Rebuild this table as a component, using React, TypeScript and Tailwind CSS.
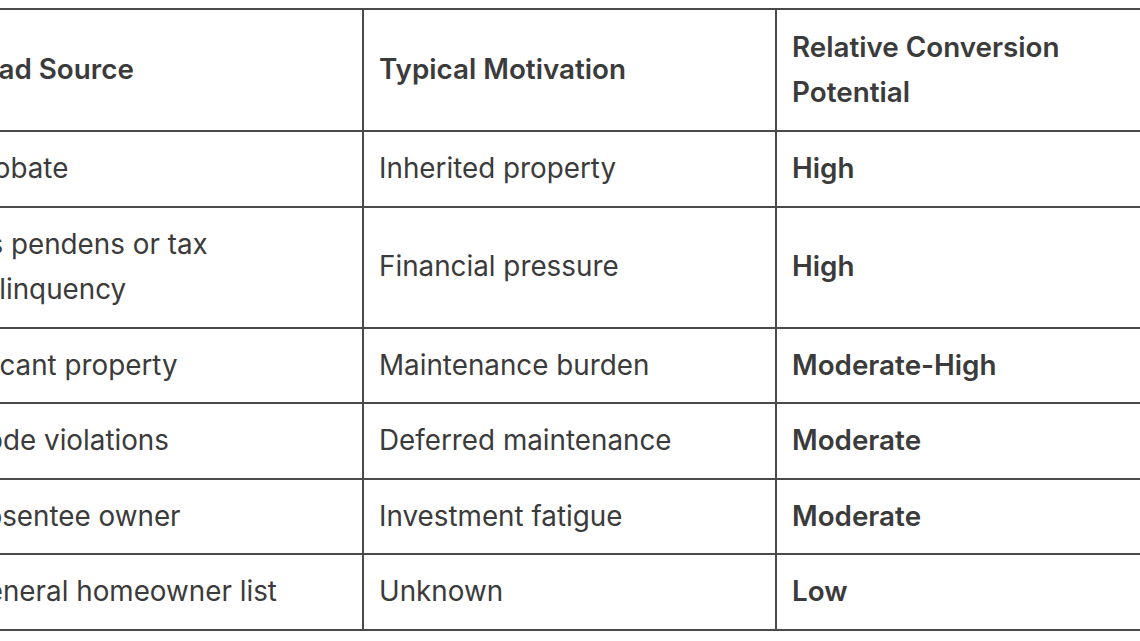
const rows: [string, string, string][] = [
  ["Probate", "Inherited property", "High"],
  ["Lis pendens or tax delinquency", "Financial pressure", "High"],
  ["Vacant property", "Maintenance burden", "Moderate-High"],
  ["Code violations", "Deferred maintenance", "Moderate"],
  ["Absentee owner", "Investment fatigue", "Moderate"],
  ["General homeowner list", "Unknown", "Low"],
];

export default function App() {
  return (
    <div
      className="w-[1140px] h-[641px] overflow-hidden bg-white pt-2 text-[#3b3b3b]"
      style={{ fontFamily: "Inter, 'Noto Sans', sans-serif" }}
    >
      <table className="ml-[-51px] w-[1240px] table-fixed border-collapse text-[27.8px] leading-[45.5px]">
        <colgroup>
          <col className="w-[413px]" />
          <col className="w-[413px]" />
          <col className="w-[414px]" />
        </colgroup>
        <thead>
          <tr>
            <th className="border-2 border-[#4a4a4a] px-[15px] py-[14.5px] text-left align-middle font-semibold">
              Lead Source
            </th>
            <th className="border-2 border-[#4a4a4a] px-[15px] py-[14.5px] text-left align-middle font-semibold">
              Typical Motivation
            </th>
            <th className="border-2 border-[#4a4a4a] px-[15px] py-[14.5px] text-left align-middle font-semibold">
              Relative Conversion Potential
            </th>
          </tr>
        </thead>
        <tbody>
          {rows.map(([source, motivation, potential]) => (
            <tr key={source}>
              <td className="border-2 border-[#4a4a4a] px-[15px] py-[14px] align-middle">{source}</td>
              <td className="border-2 border-[#4a4a4a] px-[15px] py-[14px] align-middle">{motivation}</td>
              <td className="border-2 border-[#4a4a4a] px-[15px] py-[14px] align-middle font-semibold">
                {potential}
              </td>
            </tr>
          ))}
        </tbody>
      </table>
    </div>
  );
}
